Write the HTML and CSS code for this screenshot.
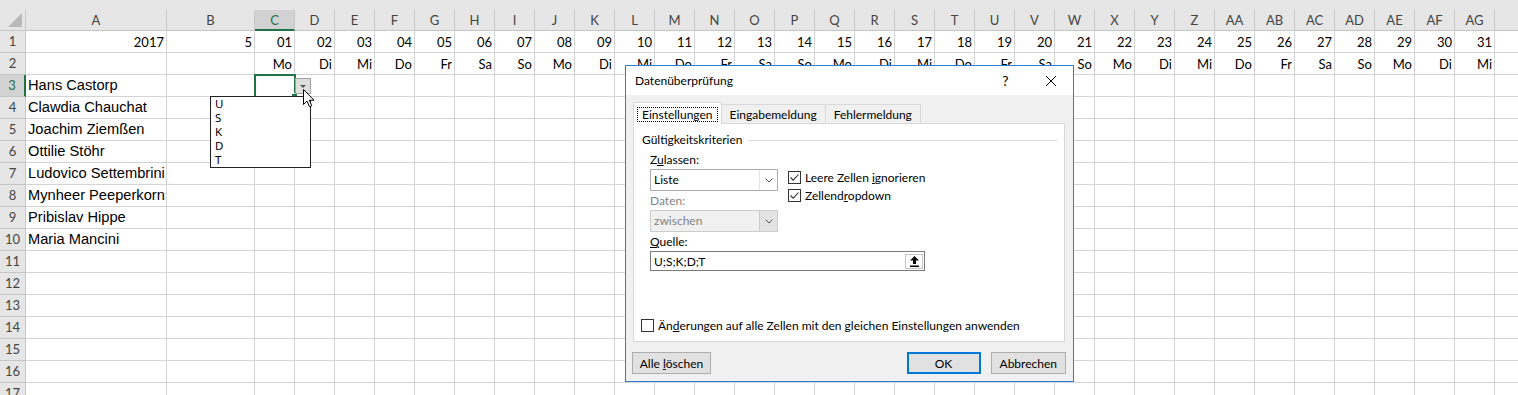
FILE: index.html
```html
<!DOCTYPE html>
<html lang="de">
<head>
    <meta charset="UTF-8">
    <meta name="viewport" content="width=device-width, initial-scale=1.0">
    <title>Datenüberprüfung</title>
    <link rel="stylesheet" href="styles.css">
</head>
<body>
    <div class="window">
        <div class="top-strip"></div>
        <div class="sheet"></div>

        <div class="dd-button"><i></i></div>
        <ul class="dd-list">
            <li>U</li>
            <li>S</li>
            <li>K</li>
            <li>D</li>
            <li>T</li>
        </ul>
        <svg class="cursor" width="12" height="19" viewBox="0 0 12 19">
            <path d="M0.5 0.5 L0.5 15.5 L4 12 L6.5 17.8 L8.8 16.8 L6.4 11.2 L11 11.2 Z" fill="#fff" stroke="#000" stroke-width="1"/>
        </svg>

        <div class="dialog">
            <div class="dlg-title">
                <span class="dlg-caption">Datenüberprüfung</span>
                <span class="dlg-help">?</span>
                <span class="dlg-close">
                    <svg viewBox="0 0 10 10"><path d="M0 0 L10 10 M10 0 L0 10"/></svg>
                </span>
            </div>
            <div class="tabs">
                <div class="tab active"><span>Einstellungen</span></div>
                <div class="tab">Eingabemeldung</div>
                <div class="tab">Fehlermeldung</div>
            </div>
            <div class="panel">
                <div class="group-title">Gültigkeitskriterien</div>
                <div class="criteria">
                    <div class="criteria-top">
                        <div class="fields">
                            <span class="field-label">Z<u>u</u>lassen:</span>
                            <div class="combo">
                                <span>Liste</span>
                                <i class="arrow"><svg viewBox="0 0 8 5"><path d="M0.5 0.5 L4 4 L7.5 0.5"/></svg></i>
                            </div>
                            <span class="field-label disabled">Daten:</span>
                            <div class="combo disabled">
                                <span>zwischen</span>
                                <i class="arrow"><svg viewBox="0 0 8 5"><path d="M0.5 0.5 L4 4 L7.5 0.5"/></svg></i>
                            </div>
                        </div>
                        <div class="checks">
                            <div class="check">
                                <span class="box"><svg viewBox="0 0 11 11"><path d="M1.5 5.5 L4.2 8.2 L9.5 2.5"/></svg></span>
                                <span>Leere Zellen <u>i</u>gnorieren</span>
                            </div>
                            <div class="check">
                                <span class="box"><svg viewBox="0 0 11 11"><path d="M1.5 5.5 L4.2 8.2 L9.5 2.5"/></svg></span>
                                <span>Zellend<u>r</u>opdown</span>
                            </div>
                        </div>
                    </div>
                    <span class="field-label"><u>Q</u>uelle:</span>
                    <div class="source">
                        <span class="source-text">U;S;K;D;T</span>
                        <span class="pick">
                            <svg width="9" height="11" viewBox="0 0 9 11"><path d="M4.5 0 L9 4.5 L6 4.5 L6 8 L3 8 L3 4.5 L0 4.5 Z"/><rect y="9.5" width="9" height="1.5"/></svg>
                        </span>
                    </div>
                </div>
                <div class="check apply">
                    <span class="box"></span>
                    <span>Än<u>d</u>erungen auf alle Zellen mit den gleichen Einstellungen anwenden</span>
                </div>
            </div>
            <div class="dlg-buttons">
                <button class="btn wide">Alle <u>l</u>öschen</button>
                <button class="btn default">OK</button>
                <button class="btn">Abbrechen</button>
            </div>
        </div>
    </div>
    <script>
        const sheet = document.querySelector('.sheet');
        const days = ['Mo', 'Di', 'Mi', 'Do', 'Fr', 'Sa', 'So'];
        const names = ['Hans Castorp', 'Clawdia Chauchat', 'Joachim Ziemßen', 'Ottilie Stöhr',
            'Ludovico Settembrini', 'Mynheer Peeperkorn', 'Pribislav Hippe', 'Maria Mancini'];

        function addCell(cls, text) {
            const el = document.createElement('div');
            el.className = cls;
            el.textContent = text || '';
            sheet.appendChild(el);
            return el;
        }

        function colName(i) {
            return i < 26 ? String.fromCharCode(65 + i) : 'A' + String.fromCharCode(39 + i);
        }

        addCell('head corner');
        for (let i = 0; i < 33; i++) {
            addCell(i === 2 ? 'head colhead active' : 'head colhead', colName(i));
        }
        addCell('head colhead rest');

        for (let r = 1; r <= 17; r++) {
            addCell(r === 3 ? 'head rowhead active' : 'head rowhead', String(r));
            if (r === 1) {
                addCell('num', '2017');
                addCell('num', '5');
            } else if (r >= 3 && r <= 10) {
                addCell('name', names[r - 3]);
                addCell('');
            } else {
                addCell('');
                addCell('');
            }
            for (let d = 1; d <= 31; d++) {
                let text = '';
                if (r === 1) text = String(d).padStart(2, '0');
                if (r === 2) text = days[(d - 1) % 7];
                let cls = text ? 'num' : '';
                if (r === 3 && d === 1) cls = 'sel';
                addCell(cls, text);
            }
            addCell('rest');
        }
    </script>
</body>
</html>
```

FILE: styles.css
```css
body {
    margin: 0;
    background-color: #fff;
    font-family: Lato, sans-serif;
    overflow: hidden;
}
.window {
    position: relative;
    width: 1518px;
    height: 395px;
    overflow: hidden;
}
.top-strip {
    height: 10px;
    background-color: #e6e6e6;
}
.sheet {
    display: grid;
    grid-template-columns: 26px 141px 88px repeat(31, 40px) 1fr;
    grid-template-rows: 21px;
    grid-auto-rows: 22px;
}
.sheet div {
    box-sizing: border-box;
    border-right: 1px solid #d4d4d4;
    border-bottom: 1px solid #d4d4d4;
    padding: 0 2px;
    font-size: 13px;
    line-height: 22px;
    white-space: nowrap;
    color: #000;
}
.sheet .head {
    background-color: #e6e6e6;
    border-color: #c6c6c6;
    color: #444;
    text-align: center;
    line-height: 20px;
    padding: 0;
}
.sheet .rowhead {
    line-height: 21px;
}
.sheet .head.active {
    background-color: #d2d2d2;
    color: #217346;
}
.sheet .colhead.active {
    border-bottom: 2px solid #217346;
}
.sheet .rowhead.active {
    border-right: 2px solid #217346;
}
.sheet .corner {
    display: flex;
    justify-content: flex-end;
    align-items: flex-end;
    padding: 0 3px 3px 0;
}
.sheet .corner::after {
    content: "";
    border-left: 14px solid transparent;
    border-bottom: 14px solid #b9b9b9;
}
.sheet .rest {
    border-right: none;
}
.sheet .num {
    text-align: right;
    padding-right: 2px;
}
.sheet .name {
    font-family: "Liberation Sans", Arial, sans-serif;
    font-size: 14.667px;
    line-height: 21px;
}
.sheet .sel {
    position: relative;
    outline: 2px solid #217346;
    outline-offset: -1px;
    z-index: 1;
}
.sheet .sel::after {
    content: "";
    position: absolute;
    right: -4px;
    bottom: -4px;
    width: 5px;
    height: 5px;
    background-color: #217346;
    border: 1px solid #fff;
}

.dd-button {
    position: absolute;
    left: 295px;
    top: 78px;
    width: 16px;
    height: 16px;
    box-sizing: border-box;
    border: 1px solid #a3a3a3;
    background-color: #dedede;
    display: flex;
    justify-content: center;
    padding-top: 6px;
    z-index: 2;
}
.dd-button i {
    width: 0;
    height: 0;
    border-left: 3.5px solid transparent;
    border-right: 3.5px solid transparent;
    border-top: 3.5px solid #555;
}
.dd-list {
    position: absolute;
    left: 210px;
    top: 96px;
    width: 101px;
    height: 72px;
    box-sizing: border-box;
    margin: 0;
    padding: 0 0 0 4px;
    list-style: none;
    background-color: #fff;
    border: 1px solid #222;
    font-family: "Noto Sans", sans-serif;
    font-size: 11.5px;
    line-height: 14px;
    z-index: 3;
}
.cursor {
    position: absolute;
    left: 303px;
    top: 89px;
    z-index: 4;
}

.dialog {
    position: absolute;
    left: 625px;
    top: 65px;
    width: 449px;
    height: 317px;
    box-sizing: border-box;
    border: 1px solid #2a7fd4;
    background-color: #f0f0f0;
    font-family: "Segoe UI", Lato, sans-serif;
    font-size: 12px;
    color: #000;
    z-index: 5;
}
.dlg-title {
    display: flex;
    align-items: center;
    height: 29px;
    background-color: #fff;
}
.dlg-caption {
    flex: 1;
    padding-left: 9px;
}
.dlg-help,
.dlg-close {
    display: flex;
    align-items: center;
    justify-content: center;
    width: 45px;
    height: 29px;
}
.dlg-help {
    font-size: 14px;
}
.dlg-close svg {
    width: 10px;
    height: 10px;
    stroke: #000;
    stroke-width: 1;
}
.tabs {
    display: flex;
    align-items: flex-end;
    height: 21px;
    margin: 7px 0 0 7px;
    position: relative;
    z-index: 1;
}
.tab {
    box-sizing: border-box;
    height: 19px;
    padding: 0 8px;
    border: 1px solid #d9d9d9;
    border-bottom: none;
    line-height: 19px;
}
.tab + .tab {
    margin-left: -1px;
}
.tab.active {
    display: flex;
    align-items: center;
    height: 22px;
    margin-bottom: -1px;
    padding: 1px 3px 0;
    background-color: #fff;
}
.tab.active span {
    padding: 0 4px;
    line-height: 13px;
    border: 1px dotted #000;
}
.panel {
    display: flex;
    flex-direction: column;
    box-sizing: border-box;
    height: 219px;
    margin: 0 8px 0 7px;
    border: 1px solid #d9d9d9;
    background-color: #fff;
}
.group-title {
    display: flex;
    align-items: center;
    gap: 6px;
    margin: 8px 6px 0 8px;
    line-height: 16px;
}
.group-title::after {
    content: "";
    flex: 1;
    border-top: 1px solid #dcdcdc;
}
.criteria {
    padding-left: 16px;
}
.criteria-top {
    display: flex;
    gap: 10px;
    margin-top: 4px;
}
.fields {
    width: 128px;
}
.field-label {
    display: block;
    line-height: 16px;
}
.field-label.disabled {
    margin-top: 2px;
    color: #838383;
}
.criteria > .field-label {
    margin-top: 2px;
}
.combo {
    display: flex;
    box-sizing: border-box;
    height: 22px;
    margin-top: 1px;
    border: 1px solid #adadad;
    background-color: #fff;
}
.combo span {
    flex: 1;
    padding-left: 3px;
    line-height: 20px;
}
.combo .arrow {
    display: flex;
    align-items: center;
    justify-content: center;
    width: 17px;
    border-left: 1px solid #e3e3e3;
}
.combo .arrow svg {
    width: 8px;
    height: 5px;
    fill: none;
    stroke: #555;
    stroke-width: 1;
}
.combo.disabled {
    border-color: #cccccc;
    background-color: #f0f0f0;
    color: #838383;
}
.combo.disabled .arrow {
    border-left-color: #cccccc;
    background-color: #e3e3e3;
}
.checks {
    margin-top: 19px;
}
.check {
    display: flex;
    align-items: center;
    gap: 4px;
    height: 13px;
}
.check + .check {
    margin-top: 5px;
}
.box {
    display: flex;
    box-sizing: border-box;
    width: 13px;
    height: 13px;
    border: 1px solid #333;
    background-color: #fff;
}
.box svg {
    width: 11px;
    height: 11px;
    fill: none;
    stroke: #333;
    stroke-width: 1.1;
}
.source {
    display: flex;
    align-items: center;
    box-sizing: border-box;
    width: 275px;
    height: 20px;
    margin-top: 1px;
    padding-left: 3px;
    border: 1px solid #7a7a7a;
    background-color: #fff;
}
.source-text {
    flex: 1;
}
.pick {
    display: flex;
    align-items: center;
    justify-content: center;
    box-sizing: border-box;
    width: 18px;
    height: 15px;
    margin-right: 1px;
    border: 1px solid #c4c4c4;
}
.check.apply {
    margin: auto 0 9px 7px;
}
.dlg-buttons {
    display: flex;
    gap: 10px;
    margin: 10px 7px 0 6px;
}
.btn {
    box-sizing: border-box;
    height: 22px;
    min-width: 74px;
    padding: 0 8px;
    border: 1px solid #adadad;
    background-color: #e1e1e1;
    font: inherit;
    color: #000;
    white-space: nowrap;
}
.btn.wide {
    width: 79px;
    padding: 0;
}
.btn.default {
    margin-left: auto;
    border: 2px solid #0078d7;
}
```
